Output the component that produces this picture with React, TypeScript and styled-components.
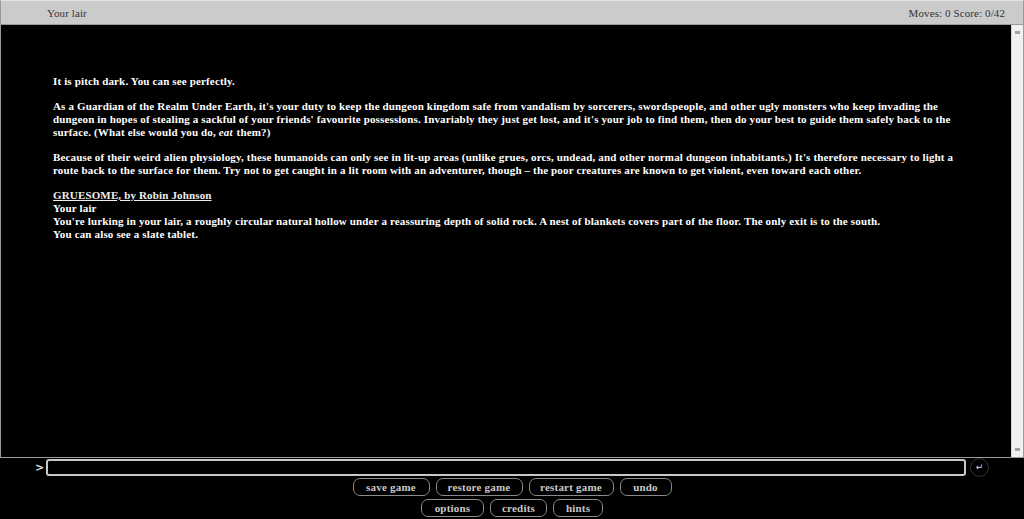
import React from "react";
import styled, { createGlobalStyle } from "styled-components";

const GlobalStyle = createGlobalStyle`
    html, body {
        margin: 0;
        padding: 0;
        background: #000;
        height: 100%;
        overflow: hidden;
    }
    #root {
        height: 100%;
    }
`;

const Page = styled.div`
    display: flex;
    flex-direction: column;
    height: 519px;
    font-family: "Liberation Serif", "Times New Roman", serif;
    color: #fff;
`;

const StatusBar = styled.div`
    height: 23px;
    background: #cbcbcb;
    border: 1px solid #999;
    border-top-color: #e4e4e4;
    display: flex;
    align-items: center;
    justify-content: space-between;
    padding: 0 18px 0 46px;
    font-size: 11px;
    letter-spacing: 0.1px;
    color: #333;
`;

const StoryFrame = styled.div`
    display: flex;
    height: 433px;
    box-sizing: border-box;
    border: 1px solid #9a9a9a;
    border-top: none;
`;

const Story = styled.div`
    flex: 1;
    padding: 50px 50px 0 52px;
    font-size: 11px;
    line-height: 13px;
    letter-spacing: 0.15px;
    font-weight: bold;
`;

/* plain scrollbar track with its two arrow nubs */
const ScrollTrack = styled.div`
    flex: 0 0 12px;
    display: flex;
    flex-direction: column;
    justify-content: space-between;
    align-items: center;
    padding: 6px 0;
    box-sizing: border-box;
    background: #f1f1f1;
    border-left: 1px solid #d6d6d6;
`;

const ScrollNub = styled.div`
    width: 5px;
    height: 3px;
    background: #a3a3a3;
`;

const Para = styled.p`
    margin: 0 0 12px;
`;

const Stress = styled.em`
    display: inline-block;
    padding-right: 1px;
`;

const Credit = styled.span`
    text-decoration: underline;
    color: #eee;
`;

const RoomName = styled.div`
    font-weight: 900;
`;

const InputRow = styled.div`
    display: flex;
    align-items: center;
    height: 19px;
    padding-left: 35px;
    gap: 4px;
`;

const Prompt = styled.span`
    font-family: "DejaVu Sans", sans-serif;
    font-weight: bold;
    font-size: 11px;
    color: #ddd;
    width: 7px;
`;

const CommandInput = styled.input`
    width: 920px;
    height: 17px;
    box-sizing: border-box;
    background: #000;
    border: 2px solid #c8c8c8;
    border-radius: 3px;
    color: #fff;
    outline: none;
`;

const EnterButton = styled.button`
    width: 19px;
    height: 19px;
    border-radius: 50%;
    border: 1px solid #333;
    background: #000;
    color: #ddd;
    padding: 0;
    font-size: 9px;
    line-height: 17px;
    font-family: "DejaVu Sans", sans-serif;
`;

const ButtonRow = styled.div<{ $top: number }>`
    display: flex;
    justify-content: center;
    gap: 6px;
    margin-top: ${(p) => p.$top}px;
`;

const GameButton = styled.button<{ $w: number }>`
    width: ${(p) => p.$w}px;
    height: 18px;
    padding: 0;
    background: #000;
    border: 1px solid #8a8a8a;
    border-radius: 7px;
    color: #c8c8c8;
    font-family: "Liberation Serif", "Times New Roman", serif;
    font-weight: bold;
    font-size: 11px;
    letter-spacing: 0.2px;
`;

const topButtons: [string, number][] = [
    ["save game", 77],
    ["restore game", 87],
    ["restart game", 85],
    ["undo", 52],
];

const bottomButtons: [string, number][] = [
    ["options", 63],
    ["credits", 57],
    ["hints", 50],
];

export default function App() {
    return (
        <Page>
            <GlobalStyle />
            <StatusBar>
                <span>Your lair</span>
                <span>Moves: 0 Score: 0/42</span>
            </StatusBar>

            <StoryFrame>
                <Story>
                    <Para>It is pitch dark. You can see perfectly.</Para>
                    <Para>
                        As a Guardian of the Realm Under Earth, it's your duty to keep the dungeon kingdom safe
                        from vandalism by sorcerers, swordspeople, and other ugly monsters who keep invading the
                        dungeon in hopes of stealing a sackful of your friends' favourite possessions. Invariably
                        they just get lost, and it's your job to find them, then do your best to guide them safely
                        back to the surface. (What else would you do, <Stress>eat</Stress> them?)
                    </Para>
                    <Para>
                        Because of their weird alien physiology, these humanoids can only see in lit-up areas
                        (unlike grues, orcs, undead, and other normal dungeon inhabitants.) It's therefore
                        necessary to light a route back to the surface for them. Try not to get caught in a lit
                        room with an adventurer, though – the poor creatures are known to get violent, even toward
                        each other.
                    </Para>
                    <div>
                        <Credit>GRUESOME, by Robin Johnson</Credit>
                    </div>
                    <RoomName>Your lair</RoomName>
                    <div>
                        You're lurking in your lair, a roughly circular natural hollow under a reassuring depth of
                        solid rock. A nest of blankets covers part of the floor. The only exit is to the south.
                    </div>
                    <div>You can also see a slate tablet.</div>
                </Story>
                <ScrollTrack>
                    <ScrollNub />
                    <ScrollNub />
                </ScrollTrack>
            </StoryFrame>

            <InputRow>
                <Prompt>&gt;</Prompt>
                <CommandInput />
                <EnterButton>↵</EnterButton>
            </InputRow>

            <ButtonRow $top={1}>
                {topButtons.map(([label, w]) => (
                    <GameButton key={label} $w={w}>
                        {label}
                    </GameButton>
                ))}
            </ButtonRow>
            <ButtonRow $top={3}>
                {bottomButtons.map(([label, w]) => (
                    <GameButton key={label} $w={w}>
                        {label}
                    </GameButton>
                ))}
            </ButtonRow>
        </Page>
    );
}
